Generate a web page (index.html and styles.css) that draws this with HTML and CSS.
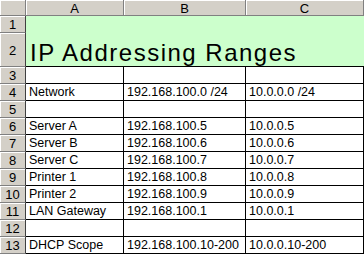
FILE: index.html
```html
<!DOCTYPE html>
<html>
<head>
<meta charset="utf-8">
<link rel="stylesheet" href="styles.css">
</head>
<body>
<div class="sheet">
  <div class="hd corner"></div>
  <div class="hd col">A</div>
  <div class="hd col">B</div>
  <div class="hd col">C</div>

  <div class="hd row">1</div>
  <div class="title-bg r1"></div>
  <div class="hd row">2</div>
  <div class="title">IP Addressing Ranges</div>

  <div class="hd row">3</div><div class="c"></div><div class="c"></div><div class="c"></div>
  <div class="hd row">4</div><div class="c">Network</div><div class="c">192.168.100.0 /24</div><div class="c">10.0.0.0 /24</div>
  <div class="hd row">5</div><div class="c"></div><div class="c"></div><div class="c"></div>
  <div class="hd row">6</div><div class="c">Server A</div><div class="c">192.168.100.5</div><div class="c">10.0.0.5</div>
  <div class="hd row">7</div><div class="c">Server B</div><div class="c">192.168.100.6</div><div class="c">10.0.0.6</div>
  <div class="hd row">8</div><div class="c">Server C</div><div class="c">192.168.100.7</div><div class="c">10.0.0.7</div>
  <div class="hd row">9</div><div class="c">Printer 1</div><div class="c">192.168.100.8</div><div class="c">10.0.0.8</div>
  <div class="hd row">10</div><div class="c">Printer 2</div><div class="c">192.168.100.9</div><div class="c">10.0.0.9</div>
  <div class="hd row">11</div><div class="c">LAN Gateway</div><div class="c">192.168.100.1</div><div class="c">10.0.0.1</div>
  <div class="hd row">12</div><div class="c"></div><div class="c"></div><div class="c"></div>
  <div class="hd row">13</div><div class="c">DHCP Scope</div><div class="c">192.168.100.10-200</div><div class="c">10.0.0.10-200</div>
</div>
</body>
</html>
```
FILE: styles.css
```css
html, body {
  margin: 0;
  padding: 0;
  background: #ffffff;
}
.sheet {
  display: grid;
  grid-template-columns: 26px 98px 122px 118px;
  grid-template-rows: 16px 17px 34px repeat(11, 17px);
  font-family: "Liberation Sans", Arial, sans-serif;
  font-size: 12px;
  color: #000;
  width: 364px;
  overflow: hidden;
}
.hd {
  box-sizing: border-box;
  background: #d4d0c8;
  border-right: 1px solid #808080;
  border-bottom: 1px solid #808080;
  box-shadow: inset 1px 1px 0 #ffffff;
  display: flex;
  align-items: center;
  justify-content: center;
  line-height: 15px;
  font-size: 13px;
  color: #000;
}
.hd.col {
  padding-top: 1px;
}
.hd.row {
  border-right-color: #404040;
  padding-top: 1px;
}
.title-bg {
  grid-column: 2 / 5;
  background: #ccffcc;
}
.title {
  grid-column: 2 / 5;
  box-sizing: border-box;
  background: #ccffcc;
  border-bottom: 1px solid #000;
  display: flex;
  align-items: flex-end;
  padding: 0 0 0 4px;
  font-size: 24px;
  letter-spacing: 1.5px;
  line-height: 27px;
  white-space: nowrap;
}
.c {
  box-sizing: border-box;
  border-right: 1px solid #000;
  border-bottom: 1px solid #000;
  padding: 1px 2px 0 3px;
  line-height: 15px;
  font-size: 12.5px;
  white-space: nowrap;
  overflow: hidden;
}
```
